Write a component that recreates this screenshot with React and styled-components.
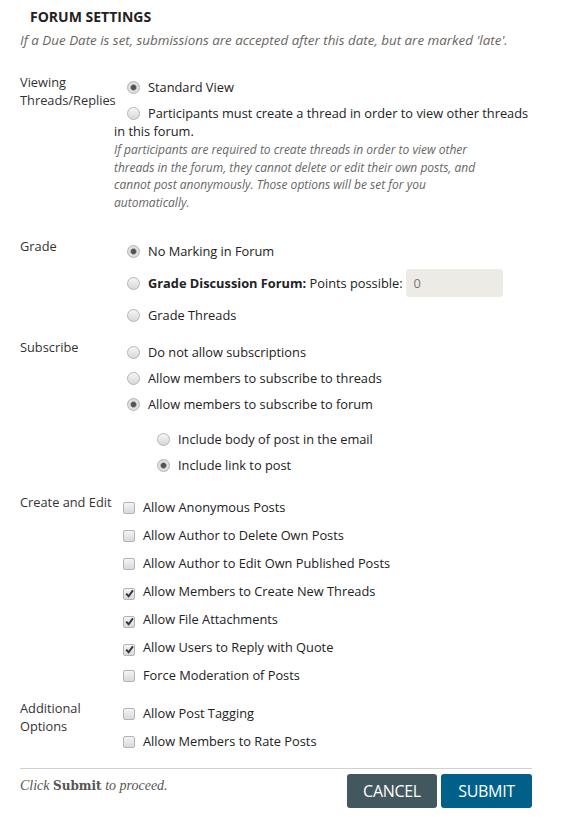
import React from "react";
import styled, { createGlobalStyle } from "styled-components";

const Global = createGlobalStyle`
  body {
    margin: 0;
    background: #fff;
    font-family: "Open Sans", "DejaVu Sans", sans-serif;
    color: #222;
  }
`;

const Page = styled.div`
  width: 512px;
  padding: 8px 34px 20px 20px;
`;

const Title = styled.h2`
  margin: 0;
  padding-left: 10px;
  font-size: 14px;
  line-height: 18px;
  font-weight: 700;
  text-transform: uppercase;
  color: #222;
`;

const Hint = styled.p`
  margin: 5px 0 0;
  font-size: 13.4px;
  line-height: 18px;
  font-style: italic;
  color: #6a6560;
`;

const Section = styled.div`
  display: grid;
  grid-template-columns: 94px 1fr;
  margin-top: ${(p) => p.$top}px;
`;

const Label = styled.div`
  font-size: 12.8px;
  line-height: 18px;
  color: #333;
  white-space: nowrap;
`;

const Options = styled.div`
  display: flex;
  flex-direction: column;
  gap: ${(p) => p.$gap || 8}px;
  padding-top: ${(p) => (p.$pad === undefined ? 5 : p.$pad)}px;
  padding-left: ${(p) => p.$indent || 0}px;
  margin-top: ${(p) => p.$top || 0}px;
`;

const Option = styled.label`
  display: block;
  font-size: 12.8px;
  line-height: ${(p) => (p.$tall ? 28 : 18)}px;
  color: #222;
`;

const RadioMark = styled.span`
  display: inline-block;
  box-sizing: border-box;
  width: 13px;
  height: 13px;
  margin: 0 8px 0 13px;
  vertical-align: -2px;
  border-radius: 50%;
  border: 1px solid #b4b4b4;
  background: ${(p) =>
    p.$on
      ? "radial-gradient(circle, #555 0 2.2px, #9a9a9a 2.8px, #e2e2e2 3.6px, #d6d6d6 100%)"
      : "linear-gradient(#f6f6f6, #d8d8d8)"};
`;

const BoxMark = styled.span`
  display: inline-flex;
  align-items: center;
  justify-content: center;
  box-sizing: border-box;
  width: 12px;
  height: 12px;
  margin: 0 8px 0 9px;
  vertical-align: -2px;
  border-radius: 2px;
  border: 1px solid #b4b4b4;
  background: linear-gradient(#f4f4f4, #d9d9d9);
`;

const Bold = styled.b`
  font-weight: 700;
`;

const Points = styled.span`
  display: inline-block;
  box-sizing: border-box;
  width: 97px;
  height: 28px;
  margin-left: 3px;
  padding-left: 8px;
  vertical-align: top;
  line-height: 28px;
  border-radius: 3px;
  background: #ecebe6;
  color: #777;
`;

const Note = styled.p`
  margin: 1px 0 0;
  max-width: 372px;
  font-size: 12px;
  line-height: 17.5px;
  font-style: italic;
  color: #666;
`;

const Divider = styled.hr`
  margin: 18px 0 0;
  border: 0;
  border-top: 1px solid #d0d0d0;
`;

const Footer = styled.div`
  display: flex;
  justify-content: space-between;
  align-items: flex-start;
  padding-top: 5px;
`;

const Proceed = styled.p`
  margin: 3px 0 0;
  font-family: "Liberation Serif", "DejaVu Serif", serif;
  font-style: italic;
  font-size: 14px;
  line-height: 18px;
  color: #555;
  b {
    font-style: normal;
    font-family: "DejaVu Serif", serif;
    font-size: 12px;
    font-weight: 700;
  }
`;

const Buttons = styled.div`
  display: flex;
  gap: 4px;
`;

const Button = styled.button`
  height: 34px;
  width: ${(p) => p.$w}px;
  border: 0;
  border-radius: 3px;
  font-family: "Open Sans", sans-serif;
  font-size: 16px;
  color: #fff;
  letter-spacing: -0.3px;
  background: ${(p) => (p.$primary ? "#00608a" : "#42585e")};
  cursor: pointer;
`;

const Radio = ({ on, children, tall }) => (
  <Option $tall={tall}>
    <RadioMark $on={on} />
    {children}
  </Option>
);

const Check = ({ on, children }) => (
  <Option>
    <BoxMark>
      {on && (
        <svg width="9" height="9" viewBox="0 0 9 9">
          <path d="M1.2 4.6 L3.6 7.2 L7.9 1.4" fill="none" stroke="#333" strokeWidth="1.9" />
        </svg>
      )}
    </BoxMark>
    {children}
  </Option>
);

const createEdit = [
  ["Allow Anonymous Posts", false],
  ["Allow Author to Delete Own Posts", false],
  ["Allow Author to Edit Own Published Posts", false],
  ["Allow Members to Create New Threads", true],
  ["Allow File Attachments", true],
  ["Allow Users to Reply with Quote", true],
  ["Force Moderation of Posts", false],
];

export default function App() {
  return (
    <Page>
      <Global />
      <Title>Forum Settings</Title>
      <Hint>If a Due Date is set, submissions are accepted after this date, but are marked 'late'.</Hint>

      <Section $top={24}>
        <Label>
          Viewing
          <br />
          Threads/Replies
        </Label>
        <Options>
          <Radio on>Standard View</Radio>
          <div>
            <Radio>Participants must create a thread in order to view other threads in this forum.</Radio>
            <Note>
              If participants are required to create threads in order to view other threads in the forum, they
              cannot delete or edit their own posts, and cannot post anonymously. Those options will be set for you
              automatically.
            </Note>
          </div>
        </Options>
      </Section>

      <Section $top={26}>
        <Label>Grade</Label>
        <Options $pad={0} $gap={4}>
          <Radio on tall>No Marking in Forum</Radio>
          <Radio tall>
            <Bold>Grade Discussion Forum:</Bold> Points possible:<Points>0</Points>
          </Radio>
          <Radio tall>Grade Threads</Radio>
        </Options>
      </Section>

      <Section $top={9}>
        <Label>Subscribe</Label>
        <Options>
          <Radio>Do not allow subscriptions</Radio>
          <Radio>Allow members to subscribe to threads</Radio>
          <Radio on>Allow members to subscribe to forum</Radio>
          <Options $pad={0} $indent={30} $top={9}>
            <Radio>Include body of post in the email</Radio>
            <Radio on>Include link to post</Radio>
          </Options>
        </Options>
      </Section>

      <Section $top={19}>
        <Label>Create and Edit</Label>
        <Options $gap={10}>
          {createEdit.map(([text, on]) => (
            <Check key={text} on={on}>
              {text}
            </Check>
          ))}
        </Options>
      </Section>

      <Section $top={15}>
        <Label>
          Additional
          <br />
          Options
        </Label>
        <Options $gap={10}>
          <Check>Allow Post Tagging</Check>
          <Check>Allow Members to Rate Posts</Check>
        </Options>
      </Section>

      <Divider />
      <Footer>
        <Proceed>
          Click <b>Submit</b> to proceed.
        </Proceed>
        <Buttons>
          <Button $w={90}>CANCEL</Button>
          <Button $w={91} $primary>
            SUBMIT
          </Button>
        </Buttons>
      </Footer>
    </Page>
  );
}
